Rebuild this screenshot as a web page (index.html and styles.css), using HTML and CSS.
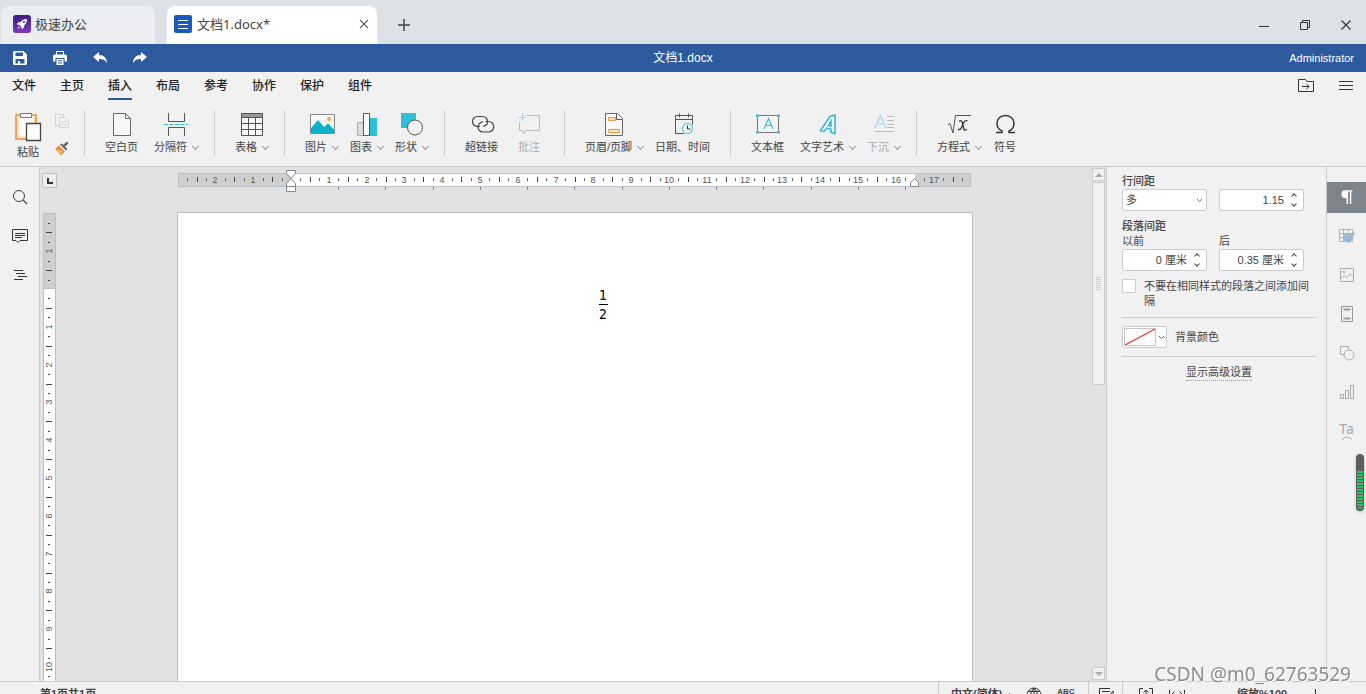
FILE: index.html
```html
<!DOCTYPE html>
<html lang="zh-CN">
<head>
<meta charset="utf-8">
<title>文档1.docx</title>
<link rel="stylesheet" href="styles.css">
</head>
<body>
<div class="app">
  <header class="tabs">
    <button class="tab tab-home">
      <svg width="18" height="18" viewBox="0 0 18 18"><defs><linearGradient id="g" x1="0" y1="0" x2="0" y2="1"><stop offset="0" stop-color="#3d1c86"/><stop offset="1" stop-color="#7a3bb4"/></linearGradient></defs><rect width="18" height="18" rx="3" fill="url(#g)"/><path d="M14 4c-3 0-5 1-6.500 3L5 7.500 3.800 9.500l2.400.2 2.200 2.200.2 2.300 2-1.200.5-2.500C13 9 14 7 14 4z" fill="#fff"/><circle cx="11" cy="7" r="1.100" fill="#5a2a9c"/><path d="M5.800 11.200l-1.300 2.600 2.600-1.300z" fill="#fff"/></svg>
      <span>极速办公</span>
    </button>
    <div class="tab tab-doc">
      <svg width="18" height="18" viewBox="0 0 18 18"><rect width="18" height="18" rx="2" fill="#185abd"/><path d="M4 5.500h10M4 9.500h10M4 13.500h10" stroke="#fff" shape-rendering="crispEdges"/></svg>
      <span class="tab-name">文档1.docx*</span>
      <button class="tab-close" aria-label="关闭标签"><svg width="10" height="10" viewBox="0 0 10 10"><path d="M1 1l8 8M9 1l-8 8" stroke="#666" stroke-width="1.200"/></svg></button>
    </div>
    <button class="tab-add" aria-label="新建标签"><svg width="12" height="12" viewBox="0 0 12 12"><path d="M6 0v12M0 6h12" stroke="#444" stroke-width="1.500"/></svg></button>
    <div class="win">
      <button aria-label="最小化"><svg width="12" height="12" viewBox="0 0 12 12"><path d="M1 7.500h10" stroke="#333"/></svg></button>
      <button aria-label="还原"><svg width="12" height="12" viewBox="0 0 12 12" fill="none" stroke="#333"><path d="M1.500 3.500h7v7h-7zM3.500 3.500v-2h7v7h-2"/></svg></button>
      <button aria-label="关闭"><svg width="12" height="12" viewBox="0 0 12 12"><path d="M1.500 1.500l9 9M10.500 1.500l-9 9" stroke="#333" stroke-width="1.200"/></svg></button>
    </div>
  </header>

  <div class="titlebar">
    <div class="quick">
      <button aria-label="保存"><svg width="14" height="14" viewBox="0 0 14 14"><path fill="#fff" fill-rule="evenodd" d="M1.500 0h9L14 3.500v9a1.500 1.500 0 0 1-1.500 1.500h-11A1.500 1.500 0 0 1 0 12.500v-11A1.500 1.500 0 0 1 1.500 0zM2.500 1.500V5H10V1.500zM2.500 8v4.500H5V10h2v2.500h4.500V8z"/></svg></button>
      <button aria-label="打印"><svg width="14" height="14" viewBox="0 0 14 14"><path fill="#fff" fill-rule="evenodd" d="M3 0h8v3.500h1.500A1.500 1.500 0 0 1 14 5v5.500h-2.500V7h-9v3.500H0V5a1.500 1.500 0 0 1 1.500-1.500H3zM4 1v2.500h6V1zM3.500 8h7v6h-7zM5 9.200v1h4v-1zM5 11.400v1h4v-1z"/></svg></button>
      <button aria-label="撤销"><svg width="14" height="12" viewBox="0 0 14 12"><path fill="#fff" d="M0 5l6-5v3c5 0 8 3 8 8.500-1.500-3.500-4-4.500-8-4.500v3z"/></svg></button>
      <button aria-label="重做"><svg width="14" height="12" viewBox="0 0 14 12"><path fill="#fff" d="M14 5L8 0v3C3 3 0 6 0 11.500 1.500 8 4 7 8 7v3z"/></svg></button>
    </div>
    <div class="doc-title">文档1.docx</div>
    <div class="user">Administrator</div>
  </div>

  <nav class="menu">
    <button>文件</button><button>主页</button><button class="on">插入</button><button>布局</button><button>参考</button><button>协作</button><button>保护</button><button>组件</button>
    <div class="menu-right">
      <button aria-label="打开位置"><svg width="16" height="14" viewBox="0 0 16 14" fill="none" stroke="#333"><path d="M.5.500h7l1.500 2h6.500v10H.5zM4 7.500h7M8.500 5l2.500 2.500L8.500 10"/></svg></button>
      <button aria-label="菜单"><svg width="14" height="10" viewBox="0 0 14 10"><path d="M0 .5h14M0 4.500h14M0 8.500h14" stroke="#333"/></svg></button>
    </div>
  </nav>

  <div class="ribbon">
    <div class="group clip">
      <button class="paste">
        <svg width="28" height="30" viewBox="0 0 28 30" fill="none"><path d="M2 3h20v24H2z" fill="#fbe7c4" stroke="#ee8f3c" stroke-width="1.500"/><path d="M5 6h14v18H5z" fill="#fff"/><path d="M6.500 1.500h11v4h-11z" fill="#fff" stroke="#777"/><path d="M12.500 11.500h14v17h-14z" fill="#fff" stroke="#444" stroke-width="1.300"/></svg>
        <span>粘贴</span>
      </button>
      <div class="clip-side">
        <button aria-label="复制"><svg width="16" height="16" viewBox="0 0 16 16" fill="#f1f1f1" stroke="#d3d3d3"><path d="M1.500 1.500h8v11h-8z"/><path d="M5.500 4.500h6l3 3v7h-9zM7.500 8.500h5M7.500 11.500h5"/></svg></button>
        <button aria-label="格式刷"><svg width="16" height="16" viewBox="0 0 16 16"><path d="M9 4l4-3.500 1.500 1.500L11 6z" fill="#666"/><path d="M6 3.500l1.500-1.300 6 6L12 9.500z" fill="#666"/><path d="M5 4.500l6 6L7 14.500 1 8z" fill="#ee8f3c"/><path d="M4 9.500l2 2 2-2" fill="none" stroke="#fff"/></svg></button>
      </div>
    </div>
    <div class="group">
      <button class="tool"><svg width="24" height="24" viewBox="0 0 24 24" fill="#f8f8f8" stroke="#666"><path d="M3.500 1.500h12l5 5v17h-17z"/><path d="M15.500 1.500v5h5z"/></svg><span class="cap">空白页</span></button>
      <button class="tool drop"><svg width="24" height="24" viewBox="0 0 24 24" fill="none" stroke="#555"><path d="M4.500 1v8.500h16V1M4.500 24v-8.500h16V24"/><path d="M0 12.500h24" stroke="#2fc0d4" stroke-dasharray="4 1.500"/></svg><span class="cap">分隔符</span></button>
    </div>
    <div class="group">
      <button class="tool drop"><svg width="24" height="24" viewBox="0 0 24 24" fill="none" stroke="#555"><path d="M1.500 1.500h21v22h-21z" fill="#f8f8f8"/><path d="M2 2h20v3H2z" fill="#999" stroke="none"/><path d="M1.500 5.500h21M1.500 11.500h21M1.500 17.500h21M8.500 5v18M15.500 5v18"/></svg><span class="cap">表格</span></button>
    </div>
    <div class="group">
      <button class="tool drop"><svg width="26" height="24" viewBox="0 0 26 24"><path d="M1.500 2.500h24v19h-24z" fill="#f8f8f8" stroke="#888"/><path d="M2 16l7-8 6 7 4-3.500 6 6V21H2z" fill="#0cb0c8"/><circle cx="20" cy="7" r="2" fill="#f5a33d"/></svg><span class="cap">图片</span></button>
      <button class="tool drop"><svg width="24" height="24" viewBox="0 0 24 24"><path d="M2.500 10.500h6v13h-6z" fill="#ddd" stroke="#aaa"/><path d="M15 6h7v18h-7z" fill="#2fc0d4"/><path d="M8.500 1.500h6v22h-6z" fill="#fff" stroke="#555"/></svg><span class="cap">图表</span></button>
      <button class="tool drop"><svg width="24" height="24" viewBox="0 0 24 24"><path d="M1 1h15v15H1z" fill="#2fc0d4"/><circle cx="15" cy="15.500" r="7.500" fill="#f1f1f1" stroke="#555"/></svg><span class="cap">形状</span></button>
    </div>
    <div class="group">
      <button class="tool"><svg width="26" height="24" viewBox="0 0 26 24" fill="none" stroke="#444" stroke-width="1.200"><path d="M11 14.500H8.500a5 5 0 0 1 0-10h5a5 5 0 0 1 5 5c0 2.500-2 4.500-4.500 5"/><path d="M16.500 9.500h3a5 5 0 0 1 0 10.500h-5.500a5 5 0 0 1-5-5c0-2.500 2-4.500 5-5.500"/></svg><span class="cap">超链接</span></button>
      <button class="tool" disabled><svg width="24" height="24" viewBox="0 0 24 24" fill="none" stroke="#bbb"><path d="M9 3.500h13.500v15H9L6.500 22l-1-3.500h-3V10"/><path d="M5.500 1v8M1 5.500h8" stroke="#8fdbe6"/></svg><span class="cap">批注</span></button>
    </div>
    <div class="group">
      <button class="tool drop"><svg width="24" height="24" viewBox="0 0 24 24" fill="#f8f8f8" stroke="#666"><path d="M3.500 1.500h12l5 5v17h-17z"/><path d="M6.500 5.500h7v3h-7zM6.500 17.500h11v3h-11z" fill="#fce3bd" stroke="#ee9a45"/><path d="M14.500 1.500v6h6" stroke="#555"/></svg><span class="cap">页眉/页脚</span></button>
      <button class="tool"><svg width="24" height="24" viewBox="0 0 24 24" fill="none" stroke="#555"><path d="M13 21.500H4.500v-18h17v9M4.500 7.500h17M8.500 1.500v4M17.500 1.500v4"/><circle cx="16.500" cy="16.500" r="5" fill="#f8f8f8" stroke="#2fb3cf"/><path d="M16.500 13.500v3.500h3" stroke="#333"/></svg><span class="cap">日期、时间</span></button>
    </div>
    <div class="group">
      <button class="tool"><svg width="24" height="24" viewBox="0 0 24 24" fill="none"><path d="M1.500 3.500h21v17h-21z" fill="#f4f4f4" stroke="#777"/><path d="M0 2.500h2.500V5H0zM21.500 2.500H24V5h-2.500zM0 19h2.500v2.500H0zM21.500 19H24v2.500h-2.500z" fill="#35bfd6"/><path d="M8 17l4.500-10.500L17 17M9.500 13.500h6" stroke="#35bfd6" stroke-width="1.200"/></svg><span class="cap">文本框</span></button>
      <button class="tool drop"><svg width="24" height="24" viewBox="0 0 24 24" fill="#f8f8f8" fill-rule="evenodd" stroke="#2fb9d0" stroke-width="1.500"><path d="M4.500 18.500L14 4.500l5-1.500v18.500l-4-1v-3.500l-4-1-3 3.500zM15 9l-2.500 4.500 2.500.5z"/></svg><span class="cap">文字艺术</span></button>
      <button class="tool drop" disabled><svg width="24" height="24" viewBox="0 0 24 24" fill="none" stroke="#bbb"><path d="M3 16L8.500 3.500 14 16M5 12h7" stroke="#9fdde7" stroke-width="1.200"/><path d="M15 4.500h7M15 8.500h7M15 12.500h7M15 15.500h7M3 19.500h19"/></svg><span class="cap">下沉</span></button>
    </div>
    <div class="group last">
      <button class="tool drop"><svg width="24" height="24" viewBox="0 0 24 24" fill="none" stroke="#555"><path d="M1 13l2-1.500 3 9.500L8.500 3.500H24"/><path d="M12 9.500q2.500-2 3.300 1l1.400 6q.8 2.800 3 .8M20.500 9q-2-1.500-4 2l-2 4.500q-1.500 3-3.500 1.500" stroke-width="1.300" stroke="#333"/></svg><span class="cap">方程式</span></button>
      <button class="tool"><svg width="24" height="24" viewBox="0 0 24 24" fill="none" stroke="#333" stroke-width="1.500"><path d="M3 20.500h6v-1.500C5.500 17.500 4 14.500 4 11.500 4 7 7.500 3.500 12.500 3.500S21 7 21 11.500c0 3-1.500 6-5 7.500v1.500h6"/></svg><span class="cap">符号</span></button>
    </div>
  </div>

  <main class="main">
    <aside class="side side-left">
      <button aria-label="查找"><svg width="16" height="16" viewBox="0 0 16 16" fill="none" stroke="#444"><circle cx="7" cy="7" r="5.500"/><path d="M11 11l4 4" stroke-width="1.300"/></svg></button>
      <button aria-label="批注列表"><svg width="16" height="16" viewBox="0 0 16 16" fill="none" stroke="#333"><path d="M.5 1.500h15v11H8l-2 2-2-2H.5zM3 5.500h10M3 7.500h10M3 9.500h7"/></svg></button>
      <button aria-label="导航"><svg width="16" height="16" viewBox="0 0 16 16" stroke="#333"><path d="M2 3.500h9M4 6.500h9M6 9.500h9M2 12.500h9"/></svg></button>
    </aside>

    <section class="work">
      <div class="corner"><svg width="15" height="15" viewBox="0 0 15 15"><path d="M.5.500h14v14H.5z" fill="#ececec" stroke="#bbbec4"/><path d="M5 5h2v4h4v2H5z" fill="#333"/></svg></div>
      <div class="hruler"><svg id="hruler" width="796" height="24" viewBox="0 0 796 24"></svg></div>
      <div class="vruler"><svg id="vruler" width="14" height="1124" viewBox="0 0 14 1124"></svg></div>
      <div class="canvas">
        <article class="page">
          <div class="fraction"><span class="num">1</span><span>2</span></div>
        </article>
      </div>
      <div class="scroll">
        <button class="sbtn" aria-label="向上"><svg width="8" height="4" viewBox="0 0 8 4"><path d="M0 4l4-4 4 4z" fill="#aaa"/></svg></button>
        <div class="thumb"><i></i></div>
        <button class="sbtn end" aria-label="向下"><svg width="8" height="4" viewBox="0 0 8 4"><path d="M0 0l4 4 4-4z" fill="#aaa"/></svg></button>
      </div>
    </section>

    <aside class="panel">
      <div class="block">
        <label class="head" for="ls">行间距</label>
        <div class="pair">
          <div class="field"><select id="ls"><option>多</option></select><svg class="chev" width="7" height="5" viewBox="0 0 7 5"><path d="M1 1l2.500 2.500L6 1" fill="none" stroke="#777"/></svg></div>
          <div class="field"><input type="text" value="1.15" aria-label="行间距值"><span class="spin"><button class="up" aria-label="增加"></button><button class="down" aria-label="减少"></button></span></div>
        </div>
      </div>
      <div class="block">
        <div class="head">段落间距</div>
        <div class="pair">
          <div><label for="bf">以前</label><div class="field"><input id="bf" type="text" value="0 厘米"><span class="spin"><button class="up" aria-label="增加"></button><button class="down" aria-label="减少"></button></span></div></div>
          <div><label for="af">后</label><div class="field"><input id="af" type="text" value="0.35 厘米"><span class="spin"><button class="up" aria-label="增加"></button><button class="down" aria-label="减少"></button></span></div></div>
        </div>
      </div>
      <label class="check"><input type="checkbox"><span>不要在相同样式的段落之间添加间隔</span></label>
      <hr>
      <div class="bg">
        <button id="bgc" class="swatch" aria-label="背景颜色"><svg width="32" height="18" viewBox="0 0 32 18"><path d="M.5.500h31v17H.5z" fill="#fff" stroke="#c4c4c4"/><path d="M1 17L31 1" stroke="#e33" stroke-width="1.300"/></svg><svg width="7" height="5" viewBox="0 0 7 5"><path d="M1 1l2.500 2.500L6 1" fill="none" stroke="#666"/></svg></button>
        <label for="bgc">背景颜色</label>
      </div>
      <hr>
      <div class="adv"><a href="#">显示高级设置</a></div>
    </aside>

    <aside class="side side-right">
      <button class="active" aria-label="段落设置"><svg width="14" height="16" viewBox="0 0 14 16"><path d="M12.500 1.200H5.500a4 4 0 0 0 0 8h1V15H8V2.500h1.800V15h1.500V2.500h1.200z" fill="#fff"/></svg></button>
      <button aria-label="表格设置"><svg width="16" height="16" viewBox="0 0 16 16" fill="none"><path d="M.5 1.500h13v12H.5z" fill="#f5f5f5" stroke="#b5b5b5"/><path d="M5 6h9v5l-4 4-5-2z" fill="#90bfe4"/><path d="M.5 5.500h13M.5 9.500h13M4.500 1.500v12M9.500 1.500v8" stroke="#b5b5b5"/><path d="M15 4l-6 7-1.500 3 3-1.500 5.500-7z" fill="#a5acb3"/></svg></button>
      <button aria-label="图片设置"><svg width="16" height="16" viewBox="0 0 16 16" fill="none" stroke="#aaa"><path d="M1.500 1.500h13v13h-13z"/><circle cx="5" cy="5" r="1"/><path d="M2 11l3-2.500 2.500 2 4-3.500 3 3"/></svg></button>
      <button aria-label="页眉页脚设置"><svg width="16" height="16" viewBox="0 0 16 16" fill="none" stroke="#999"><path d="M2.500.5h11v15h-11z"/><path d="M4.500 3.500h7M4.500 12.500h7" stroke-width="2"/></svg></button>
      <button aria-label="形状设置"><svg width="16" height="16" viewBox="0 0 16 16" fill="none" stroke="#aaa"><path d="M5 9.500H1.500v-8h8V4"/><circle cx="10" cy="10" r="5"/></svg></button>
      <button aria-label="图表设置"><svg width="16" height="16" viewBox="0 0 16 16" fill="none" stroke="#aaa"><path d="M1.500 10.500h3v4h-3zM6.500 6.500h3v8h-3zM11.500 1.500h3v13h-3z"/></svg></button>
      <button aria-label="文字艺术设置" class="ta"><span>Ta</span><svg width="10" height="4" viewBox="0 0 10 4"><path d="M0 3.500q5-5 10 0" fill="none" stroke="#aaa"/></svg></button>
    </aside>
  </main>

  <footer class="status">
    <span class="pages">第1页共1页</span>
    <div class="cell lang"><button>中文(简体)</button><svg width="7" height="5" viewBox="0 0 7 5"><path d="M1 4l2.500-2.500L6 4" fill="none" stroke="#555"/></svg>
      <button aria-label="语言"><svg width="16" height="16" viewBox="0 0 16 16" fill="none" stroke="#333"><circle cx="8" cy="8" r="7"/><path d="M8 1v14M1 8h14M2.500 4.500h11M2.500 11.500h11M8 1q-7 7 0 14M8 1q7 7 0 14"/></svg></button>
      <button class="abc">ABC</button></div>
    <div class="cell edit"><button aria-label="修订"><svg width="16" height="16" viewBox="0 0 16 16" fill="none" stroke="#333"><path d="M12 1.500H1.500v13h11V10M4 4.500h8M4 7.500h5M4 10.500h3"/><path d="M15 4l-5 6-1 2 2-1 4.500-5.500z"/></svg></button></div>
    <div class="cell zoom">
      <button aria-label="适合页面"><svg width="14" height="16" viewBox="0 0 14 16" fill="none" stroke="#333"><path d="M4 1.500H.5v13h13v-13H10M7 3v10M4.500 5.500L7 3l2.500 2.500M4.500 10.500L7 13l2.500-2.500"/></svg></button>
      <button aria-label="适合宽度"><svg width="18" height="16" viewBox="0 0 18 16" fill="none" stroke="#333"><path d="M1.500 3v10M16.500 3v10M4 8h10M6.500 4.500L3 8l3.500 3.500M11.500 4.500L15 8l-3.500 3.500"/></svg></button>
      <button class="zlabel">缩放%100</button>
      <button aria-label="放大"><svg width="12" height="16" viewBox="0 0 12 16"><path d="M8.500 2v12M2 8.500h10" stroke="#333"/></svg></button>
    </div>
  </footer>
</div>
<div class="meter"><i></i></div>
<div class="mark">CSDN @m0_62763529</div>
<script src="ruler.js"></script>
</body>
</html>
```
FILE: styles.css
```css
* { box-sizing: border-box; }
body {
  margin: 0;
  font: 11px/15px "Liberation Sans", "Noto Sans CJK SC", sans-serif;
  color: #444;
  background: #f1f1f1;
}
button, input, select { font: inherit; color: inherit; }
button { border: 0; padding: 0; background: none; }
svg { display: block; flex: none; }
.app { display: flex; flex-direction: column; height: 100vh; overflow: hidden; }

.tabs {
  display: flex;
  height: 44px;
  flex: none;
  padding: 6px 0 0 1px;
  background: #dee1e6;
  font: 13px/18px "Noto Sans", "Noto Sans CJK SC", sans-serif;
}
.tab { display: flex; align-items: center; border-radius: 8px 8px 0 0; color: #444; }
.tab-home { width: 154px; gap: 4px; padding: 0 12px 2px; background: #ebedf1; margin-right: 12px; }
.tab-doc { width: 210px; gap: 5px; padding: 0 8px 2px 7px; background: #fff; }
.tab-name { flex: 1; }
.tab-close { padding: 0; }
.tab-add { padding: 0 21px; }
.win { display: flex; margin-left: auto; }
.win button { width: 41px; display: flex; align-items: center; justify-content: center; }

.titlebar {
  display: grid;
  grid-template-columns: 1fr auto 1fr;
  align-items: center;
  height: 28px;
  flex: none;
  background: #2d5a9d;
  color: #fff;
  font-size: 12px;
}
.quick { display: flex; }
.quick button { width: 40px; height: 28px; display: flex; align-items: center; justify-content: center; }
.user { text-align: right; padding-right: 12px; font-size: 11px; }

.menu { display: flex; gap: 24px; height: 28px; flex: none; padding: 0 13px 0 12px; font-size: 12px; }
.menu > button { font-weight: 500; color: #222; padding-top: 2px; border-bottom: 2px solid transparent; }
.menu > .on { border-color: #2d5a9d; }
.menu-right { display: flex; gap: 25px; align-items: center; margin-left: auto; }

.ribbon { display: flex; height: 67px; flex: none; padding: 10px 0; border-bottom: 1px solid #cbcbcb; }
.group { display: flex; align-items: flex-start; border-right: 1px solid #cbcbcb; padding: 0 12px; }
.last { border: 0; }
.tool { display: flex; flex-direction: column; align-items: center; gap: 4px; min-width: 46px; padding: 2px 8px 0; color: #444; }
.tool:disabled { color: #aaa; }
.drop, .last .tool { min-width: 0; }
.drop { padding-right: 4px; }
.cap { display: flex; align-items: center; white-space: nowrap; }
.drop .cap::after {
  content: "";
  width: 4px;
  height: 4px;
  margin: 0 0 2px 6px;
  border: solid #999;
  border-width: 0 1px 1px 0;
  transform: rotate(45deg);
}
.clip { width: 85px; padding: 0 13px 0 14px; gap: 12px; }
.paste { display: flex; flex-direction: column; align-items: center; gap: 3px; padding-top: 2px; }
.clip-side { display: flex; flex-direction: column; gap: 12px; padding-top: 3px; }

.main { display: flex; flex: 1; min-height: 0; }
.side { display: flex; flex-direction: column; gap: 8px; width: 40px; padding-top: 15px; flex: none; }
.side button { height: 31px; display: flex; align-items: center; justify-content: center; padding-bottom: 2px; }
.side-left { border-right: 1px solid #cbcbcb; }
.side-right { border-left: 1px solid #cbcbcb; }
.side .active { background: #7d858c; }
.side .ta { flex-direction: column; color: #aaa; font: 14px/14px "Noto Sans", sans-serif; }

.work {
  flex: 1;
  min-width: 0;
  display: grid;
  grid-template: 45px minmax(0, 1fr) / 18px minmax(0, 1fr) 14px;
  background: #e2e2e2;
}
.corner { padding: 6px 0 0 2px; }
.hruler { display: flex; justify-content: center; padding-top: 3px; overflow: hidden; }
.vruler { grid-row: 2; padding: 1px 0 0 3px; overflow: hidden; }
.canvas { grid-row: 2; display: flex; justify-content: center; overflow: hidden; }
.page {
  width: 796px;
  min-height: 1124px;
  padding: 73px 57px 76px 113px;
  border: 1px solid #bbbec2;
  background: #fff;
  flex: none;
}
.fraction {
  display: flex;
  flex-direction: column;
  width: 9px;
  margin: 0 auto;
  align-items: center;
  font: 14px/18px "DejaVu Sans Condensed", "DejaVu Sans", sans-serif;
  color: #000;
}
.num { width: 9px; text-align: center; border-bottom: 1px solid #000; }
.scroll { grid-column: 3; grid-row: 1 / 3; display: flex; flex-direction: column; gap: 1px; padding: 1px 1px 1px 0; }
.sbtn { height: 13px; display: flex; align-items: center; justify-content: center; border: 1px solid #cbcbcb; background: #f1f1f1; }
.end { margin-top: auto; }
.thumb { height: 203px; display: flex; align-items: center; justify-content: center; border: 1px solid #cbcbcb; background: #f1f1f1; }
.thumb i { width: 5px; height: 13px; background: repeating-linear-gradient(#cbcbcb 0 1px, transparent 1px 2px); }
.ruler-text { font: 9px "Liberation Sans", sans-serif; fill: #555; text-anchor: middle; }

.panel {
  width: 220px;
  flex: none;
  display: flex;
  flex-direction: column;
  gap: 8px;
  padding: 7px 10px 0 15px;
  border-left: 1px solid #cbcbcb;
}
.panel hr { width: 100%; height: 1px; margin: 0; border: 0; background: #cbcbcb; }
.panel label, .head { display: block; }
.panel .head { font-weight: 500; }
.pair { display: grid; grid-template-columns: 85px 85px; gap: 12px; }
.field { position: relative; display: flex; height: 22px; border: 1px solid #cbcbcb; border-radius: 2px; background: #fff; }
.field input, .field select { flex: 1; width: 0; border: 0; background: none; outline: 0; appearance: none; padding: 0 0 0 3px; }
.field input { text-align: right; padding: 0; }
.chev { position: absolute; right: 3px; top: 8px; pointer-events: none; }
.spin { width: 19px; display: flex; flex-direction: column; align-items: center; justify-content: space-between; padding: 4px 0; }
.spin button { width: 4px; height: 4px; border: solid #444; transform: rotate(45deg); }
.spin .up { border-width: 1px 0 0 1px; }
.spin .down { border-width: 0 1px 1px 0; }
.panel .check { display: flex; gap: 8px; align-items: flex-start; }
.check input { appearance: none; width: 14px; height: 14px; margin: 0; flex: none; border: 1px solid #cbcbcb; border-radius: 1px; background: #fff; }
.bg { display: flex; align-items: center; gap: 8px; }
.swatch { width: 45px; height: 22px; display: flex; align-items: center; gap: 2px; padding: 0 1px; border: 1px solid #cbcbcb; border-radius: 2px; background: #fff; }
.adv { text-align: center; }
.adv a { display: inline-block; color: inherit; text-decoration: none; border-bottom: 1px dotted #999; }

.status {
  display: flex;
  height: 26px;
  margin-bottom: -13px;
  flex: none;
  border-top: 1px solid #cbcbcb;
  font-weight: 700;
  white-space: nowrap;
}
.status button { display: flex; align-items: center; flex: none; }
.pages { padding: 5px 0 0 40px; margin-right: auto; }
.cell { display: flex; align-items: center; border-left: 1px solid #cbcbcb; }
.lang { width: 150px; padding: 0 0 0 12px; gap: 4px; }
.lang svg + button { margin-left: 9px; }
.lang .abc { margin-left: 11px; font-size: 8px; line-height: 12px; padding-bottom: 5px; }
.edit { width: 34px; justify-content: center; }
.zoom { width: 244px; padding-left: 16px; gap: 15px; }
.zlabel { margin: 0 5px 0 36px; }

.meter { position: fixed; right: 2px; top: 454px; width: 8px; height: 57px; padding: 17px 1px 2px; border-radius: 4px; background: #5e5e5e; box-shadow: 0 1px 3px #bbb; }
.meter i { display: block; height: 38px; border-radius: 0 0 3px 3px; background: repeating-linear-gradient(#22c65b 0 2px, #5e5e5e 2px 3px); }
.mark { position: fixed; right: 15px; bottom: 7px; font: 19px/26px "Noto Sans", sans-serif; color: #8c8c8c; text-shadow: 1px 1px 0 #fff; }
```
FILE: ruler.js
```javascript
const NS = "http://www.w3.org/2000/svg";
const CM = 37.8;

function add(svg, name, attrs, text) {
  const el = document.createElementNS(NS, name);
  for (const key in attrs) el.setAttribute(key, attrs[key]);
  if (text !== undefined) el.textContent = text;
  svg.appendChild(el);
}

const h = document.getElementById("hruler");
const v = document.getElementById("vruler");
const ZERO_X = 114;
const ZERO_Y = 76;
const V_TICKS = Math.floor((v.parentElement.clientHeight - ZERO_Y) * 4 / CM);

add(h, "rect", { x: 1.5, y: 3.5, width: 792, height: 13, fill: "#cfcfcf", stroke: "#bbbec4" });
add(h, "rect", { x: ZERO_X, y: 4, width: 624, height: 12, fill: "#fff" });
for (let q = -11; q <= 71; q++) {
  const x = Math.round(ZERO_X + q * CM / 4);
  if (q === 0 || q === 66) continue;
  if (q % 4 === 0) {
    add(h, "text", { x: x, y: 13, class: "ruler-text" }, Math.abs(q / 4));
  } else if (q % 2 === 0) {
    add(h, "rect", { x: x, y: 7, width: 1, height: 5, fill: "#444" });
  } else {
    add(h, "rect", { x: x, y: 8, width: 1, height: 3, fill: "#666" });
  }
}
for (let t = 1; t <= 13; t++) {
  add(h, "rect", { x: Math.round(ZERO_X + t * 47.24), y: 17, width: 1, height: 3, fill: "#7e8794" });
}
const marker = { fill: "#fff", stroke: "#7e8794" };
add(h, "path", { d: "M109.500 .5h9v3l-4.500 5-4.500-5z", ...marker });
add(h, "path", { d: "M114 8.500l4.500 5v8h-9v-8zM109.500 16.500h9", ...marker });
add(h, "path", { d: "M737.500 8.500l4 4v4h-8v-4z", ...marker });

add(v, "rect", { x: .5, y: .5, width: 12, height: 1122, fill: "#fff", stroke: "#bbbec4" });
add(v, "rect", { x: .5, y: .5, width: 12, height: 75, fill: "#cfcfcf", stroke: "#bbbec4" });
for (let q = -7; q <= V_TICKS; q++) {
  const y = Math.round(ZERO_Y + q * CM / 4);
  if (q === 0) continue;
  if (q % 4 === 0) {
    add(v, "text", { x: 0, y: 0, class: "ruler-text", transform: `translate(9 ${y}) rotate(-90)` }, Math.abs(q / 4));
  } else if (q % 2 === 0) {
    add(v, "rect", { x: 3, y: y, width: 6, height: 1, fill: "#444" });
  } else {
    add(v, "rect", { x: 5, y: y, width: 2, height: 1, fill: "#444" });
  }
}
```
